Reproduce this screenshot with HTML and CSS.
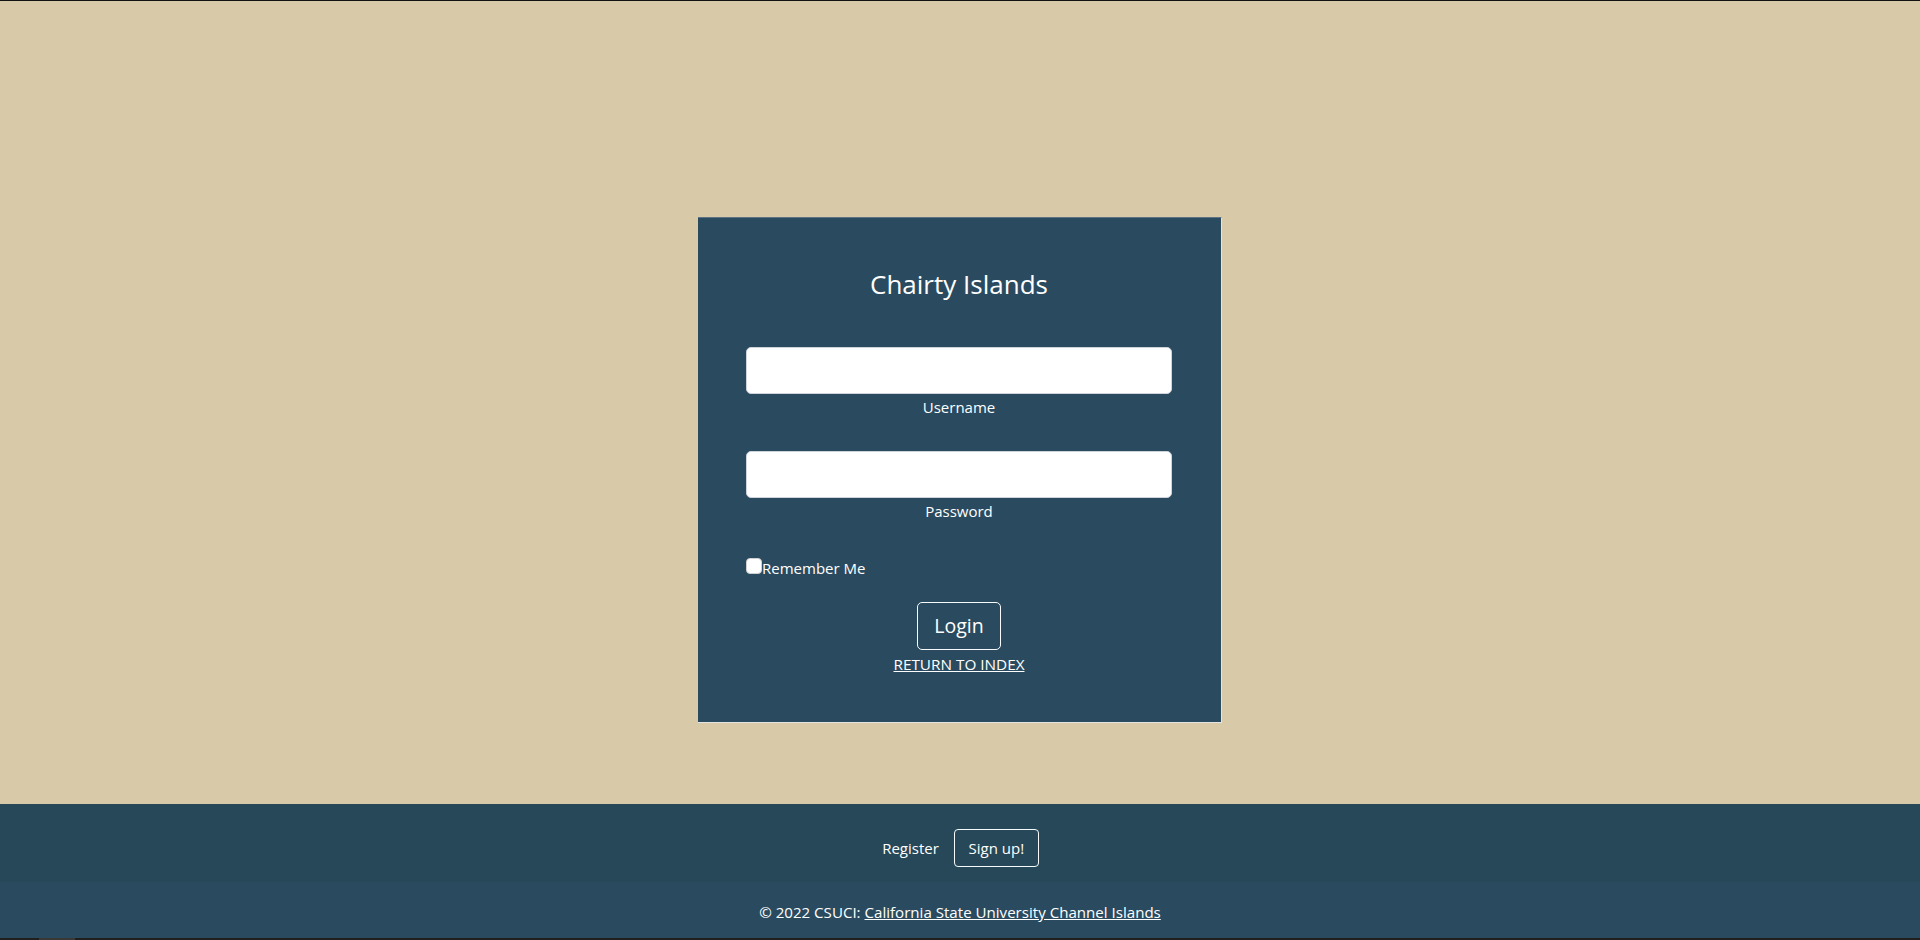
FILE: index.html
```html
<!DOCTYPE html>
<html lang="en">
<head>
<meta charset="utf-8">
<title>Chairty Islands - Login</title>
<link rel="stylesheet" href="styles.css">
</head>
<body>
<div class="page">
  <main class="main">
    <form class="card">
      <h1 class="title">Chairty Islands</h1>
      <div class="field">
        <input class="input" type="text" id="username">
        <label class="field-label" for="username">Username</label>
      </div>
      <div class="field field-second">
        <input class="input" type="password" id="password">
        <label class="field-label" for="password">Password</label>
      </div>
      <div class="remember">
        <input class="check" type="checkbox" id="remember"><label for="remember" class="remember-label">Remember Me</label>
      </div>
      <div class="actions">
        <button class="btn-login" type="button">Login</button>
        <a class="return-link" href="#">RETURN TO INDEX</a>
      </div>
    </form>
  </main>
  <footer>
    <div class="footer-top">
      <span class="register">Register</span>
      <button class="btn-signup" type="button">Sign up!</button>
    </div>
    <div class="footer-bottom">
      <span>© 2022 CSUCI: <a class="footer-link" href="#">California State University Channel Islands</a></span>
    </div>
    <div class="bottom-bar"><span class="bottom-thumb"></span></div>
  </footer>
</div>
</body>
</html>
```

FILE: styles.css
```css
html, body {
  margin: 0;
  padding: 0;
}

body {
  font-family: "Open Sans", "Noto Sans", "Liberation Sans", sans-serif;
  color: #ffffff;
  background: #d8c9a9;
}

.page {
  height: 940px;
  display: flex;
  flex-direction: column;
  border-top: 1px solid #121212;
  box-sizing: border-box;
}

.main {
  flex: 1;
  display: flex;
  justify-content: center;
  align-items: flex-start;
  padding-top: 216px;
  background: #d8c9a9;
}

.card {
  width: 524px;
  box-sizing: border-box;
  background: #2a4b5f;
  border-top: 1px solid #5d7383;
  border-right: 1px solid #e4e4e4;
  border-bottom: 1px solid #e4e4e4;
  padding: 49px 49px 46px 48px;
  display: flex;
  flex-direction: column;
}

.title {
  margin: 0;
  font-weight: 400;
  font-size: 26px;
  line-height: 34px;
  text-align: center;
}

.field {
  margin-top: 46px;
  display: flex;
  flex-direction: column;
}

.field-second {
  margin-top: 32px;
}

.input {
  height: 47px;
  box-sizing: border-box;
  border: 1px solid #ced4da;
  border-radius: 5px;
  background: #ffffff;
  font-size: 18px;
  padding: 8px 16px;
  margin: 0;
}

.field-label {
  text-align: center;
  font-size: 15px;
  line-height: 24px;
  margin-top: 1px;
}

.remember {
  margin-top: 33px;
  display: flex;
  align-items: center;
  height: 24px;
}

.check {
  appearance: none;
  -webkit-appearance: none;
  width: 16px;
  height: 16px;
  margin: 0;
  border-radius: 4px;
  background: #ffffff;
  border: 1px solid #d0d0d0;
  box-sizing: border-box;
  position: relative;
  top: -2px;
}

.remember-label {
  font-size: 15px;
  line-height: 24px;
}

.actions {
  margin-top: 22px;
  display: flex;
  flex-direction: column;
  align-items: center;
}

.btn-login {
  height: 48px;
  box-sizing: border-box;
  background: transparent;
  color: #ffffff;
  border: 1px solid #f8f9fa;
  border-radius: 5px;
  font-family: inherit;
  font-size: 19.5px;
  line-height: 28px;
  padding: 9px 10px;
  width: 84px;
}

.return-link {
  color: #ffffff;
  font-size: 15.3px;
  line-height: 24px;
  text-decoration: underline;
  margin-top: 2px;
}

.footer-top {
  height: 78px;
  background: #264859;
  display: flex;
  justify-content: center;
  align-items: flex-start;
  box-sizing: border-box;
  padding-top: 25px;
  gap: 15px;
  padding-left: 1px;
}

.register {
  font-size: 15px;
  line-height: 24px;
  margin-top: 7px;
}

.btn-signup {
  height: 38px;
  width: 85px;
  box-sizing: border-box;
  background: transparent;
  color: #ffffff;
  border: 1px solid #f8f9fa;
  border-radius: 4px;
  font-family: inherit;
  font-size: 15px;
  line-height: 24px;
  padding: 6px 8px;
}

.footer-bottom {
  height: 56px;
  background: #2a4b5f;
  display: flex;
  justify-content: center;
  align-items: center;
  padding-top: 4px;
  box-sizing: border-box;
  font-size: 15.1px;
  line-height: 24px;
}

.footer-link {
  color: #ffffff;
  text-decoration: underline;
}

.bottom-bar {
  height: 2px;
  background: #201f1d;
  display: flex;
}

.bottom-thumb {
  width: 36px;
  margin-left: 39px;
  background: #3a3835;
}
```
